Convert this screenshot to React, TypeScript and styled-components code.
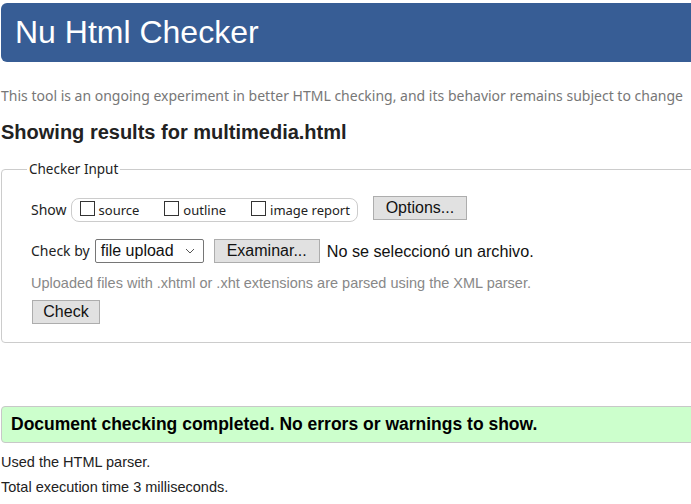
import React from "react";
import styled, { createGlobalStyle } from "styled-components";

const Global = createGlobalStyle`
  html, body { margin: 0; padding: 0; background: #fff; overflow: hidden; }
  body { font-family: "Liberation Sans", Arial, sans-serif; color: #111; }
`;

const SEGOE = `"Noto Sans", "Open Sans", sans-serif`;
const ARIAL = `"Liberation Sans", Arial, sans-serif`;

const Page = styled.div`
  width: 760px;
  padding: 3px 0 0 1px;
`;

const Header = styled.header`
  height: 59px;
  background: #375d95;
  border-radius: 6px;
  padding-left: 14px;
  display: flex;
  align-items: center;
`;

const Title = styled.h1`
  margin: 0;
  font-family: ${ARIAL};
  font-weight: normal;
  font-size: 32px;
  line-height: 59px;
  color: #fff;
`;

const Tagline = styled.p`
  margin: 24px 0 0;
  font-family: ${SEGOE};
  font-size: 14px;
  line-height: 20px;
  color: #777;
  white-space: nowrap;
`;

const Heading = styled.h2`
  margin: 14px 0 0;
  font-family: ${ARIAL};
  font-weight: bold;
  font-size: 20px;
  line-height: 24px;
  color: #222;
`;

const Fieldset = styled.fieldset`
  margin: 15px 0 0;
  padding: 15px 0 18px 29px;
  border: 1px solid #ccc;
  border-radius: 4px;
  display: flex;
  flex-direction: column;
  align-items: flex-start;
`;

const Legend = styled.legend`
  padding: 0 2px;
  margin-left: -4px;
  font-family: ${SEGOE};
  font-size: 13.5px;
  line-height: 20px;
  color: #222;
`;

const Row = styled.div<{ $mt?: number }>`
  display: flex;
  align-items: center;
  margin-top: ${(p) => p.$mt ?? 0}px;
`;

const Label = styled.span<{ $mr: number; $drop?: number }>`
  font-family: ${SEGOE};
  font-size: 14px;
  line-height: 20px;
  color: #222;
  margin-right: ${(p) => p.$mr}px;
  margin-top: ${(p) => p.$drop ?? 0}px;
`;

const Pill = styled.div`
  display: flex;
  align-items: center;
  height: 22px;
  margin-top: 4px;
  padding: 0 7px 0 8px;
  border: 1px solid #ccc;
  border-radius: 8px;
  margin-right: 15px;
`;

const Option = styled.label<{ $mr?: number }>`
  display: flex;
  align-items: center;
  margin-right: ${(p) => p.$mr ?? 0}px;
  font-family: ${SEGOE};
  font-size: 13px;
  color: #222;
`;

const Box = styled.input`
  appearance: none;
  width: 15px;
  height: 15px;
  margin: 0 4px 0 0;
  border: 1px solid #333;
  background: #fff;
  box-sizing: border-box;
  position: relative;
  top: -2px;
`;

const Button = styled.button<{ $w: number }>`
  width: ${(p) => p.$w}px;
  height: 24px;
  padding: 0;
  background: #e1e1e1;
  border: 1px solid #adadad;
  border-radius: 0;
  font-family: ${ARIAL};
  font-size: 16px;
  color: #111;
`;

const Select = styled.div`
  width: 109px;
  height: 24px;
  box-sizing: border-box;
  border: 1px solid #767676;
  border-radius: 2px;
  display: flex;
  align-items: center;
  justify-content: space-between;
  padding: 0 8px 0 5px;
  margin-right: 10px;
  font-family: ${ARIAL};
  font-size: 16px;
  color: #111;
`;

const NoFile = styled.span`
  margin-left: 7px;
  font-family: ${ARIAL};
  font-size: 16.2px;
  color: #111;
`;

const Hint = styled.p`
  margin: 10px 0 0;
  font-family: ${ARIAL};
  font-size: 14.5px;
  line-height: 20px;
  color: #888;
`;

const CheckWrap = styled.div`
  margin-top: 7px;
  padding-left: 1px;
`;

const Success = styled.div`
  margin-top: 63px;
  height: 37px;
  box-sizing: border-box;
  background: #ccffcc;
  border: 1px solid #c8c8c8;
  border-radius: 4px;
  padding-left: 9px;
  display: flex;
  align-items: center;
  font-family: ${ARIAL};
  font-weight: bold;
  font-size: 17.5px;
  color: #000;
`;

const Note = styled.p<{ $mt: number }>`
  margin: ${(p) => p.$mt}px 0 0;
  font-family: ${ARIAL};
  font-size: 14.5px;
  line-height: 20px;
  color: #222;
`;

const Chevron = () => (
  <svg width="10" height="6" viewBox="0 0 10 6" aria-hidden="true">
    <path d="M1 1l4 4 4-4" fill="none" stroke="#555" strokeWidth="1" />
  </svg>
);

export default function App() {
  return (
    <Page>
      <Global />
      <Header>
        <Title>Nu Html Checker</Title>
      </Header>
      <Tagline>
        This tool is an ongoing experiment in better HTML checking, and its behavior remains subject to change
      </Tagline>
      <Heading>Showing results for multimedia.html</Heading>
      <Fieldset>
        <Legend>Checker Input</Legend>
        <Row>
          <Label $mr={4} $drop={4}>Show</Label>
          <Pill>
            <Option $mr={25}>
              <Box type="checkbox" />
              source
            </Option>
            <Option $mr={25}>
              <Box type="checkbox" />
              outline
            </Option>
            <Option>
              <Box type="checkbox" />
              image report
            </Option>
          </Pill>
          <Button $w={94}>Options...</Button>
        </Row>
        <Row $mt={17}>
          <Label $mr={5}>Check by</Label>
          <Select>
            <span>file upload</span>
            <Chevron />
          </Select>
          <Button $w={106}>Examinar...</Button>
          <NoFile>No se seleccionó un archivo.</NoFile>
        </Row>
        <Hint>Uploaded files with .xhtml or .xht extensions are parsed using the XML parser.</Hint>
        <CheckWrap>
          <Button $w={68}>Check</Button>
        </CheckWrap>
      </Fieldset>
      <Success>Document checking completed. No errors or warnings to show.</Success>
      <Note $mt={9}>Used the HTML parser.</Note>
      <Note $mt={5}>Total execution time 3 milliseconds.</Note>
    </Page>
  );
}
